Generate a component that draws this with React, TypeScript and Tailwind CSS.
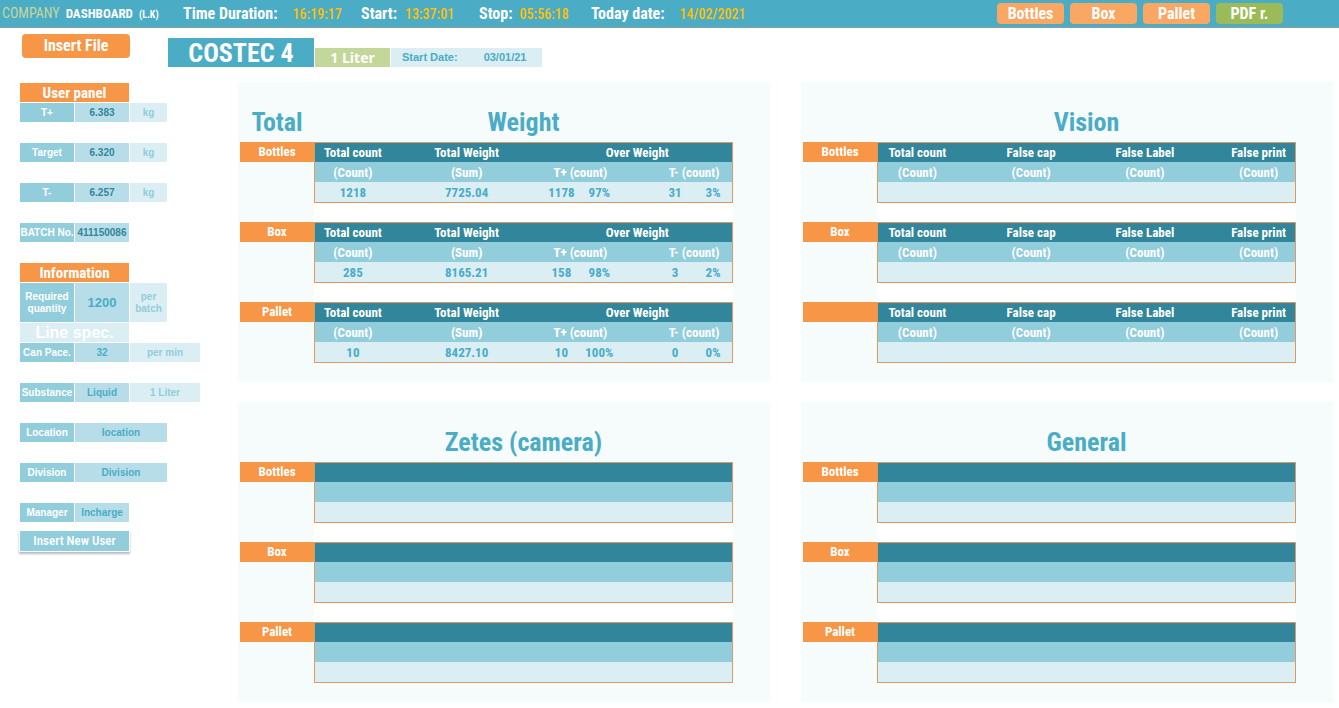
import React from "react";

const narrow = "font-['Agency_FB','Roboto_Condensed','Liberation_Sans_Narrow','Open_Sans_Condensed',sans-serif]";

type Metric = { label: string; value: string };

const clocks: Metric[] = [
  { label: "Time Duration:", value: "16:19:17" },
  { label: "Start:", value: "13:37:01" },
  { label: "Stop:", value: "05:56:18" },
  { label: "Today date:", value: "14/02/2021" },
];

const clockLayout = [
  "w-[178px] gap-[15px]",
  "w-[118px] gap-2",
  "w-[112px] gap-[7px]",
  "gap-[15px]",
];

function Header() {
  return (
    <header className="flex h-7 items-center border-b border-[#8c9a9c] bg-[#4bacc6] pl-0.5 pr-14 font-bold text-white">
      <h1 className="flex w-[181px] shrink-0 items-baseline gap-1.5 whitespace-nowrap text-sm">
        <span className="font-normal text-[#c4d79b]">COMPANY</span>
        <span className="text-[13px]">DASHBOARD</span>
        <span className="text-[10px]">(L.K)</span>
      </h1>
      <dl className="flex grow text-base">
        {clocks.map((c, i) => (
          <div key={c.label} className={`flex shrink-0 items-baseline whitespace-nowrap ${clockLayout[i]}`}>
            <dt>{c.label}</dt>
            <dd className="text-sm font-medium text-[#ffc000]">{c.value}</dd>
          </div>
        ))}
      </dl>
      <nav className="flex gap-1.5">
        {["Bottles", "Box", "Pallet"].map((name) => (
          <button key={name} type="button" className="h-[21px] w-[67px] rounded bg-[#f9a763] text-base leading-5">
            {name}
          </button>
        ))}
        <button type="button" className="h-[21px] w-[67px] rounded bg-[#9bbb59] text-base leading-5">
          PDF r.
        </button>
      </nav>
    </header>
  );
}

function TitleBar() {
  return (
    <div className="flex h-[54px] items-start pl-[22px]">
      <button
        type="button"
        className="mr-[38px] mt-1.5 h-6 w-[108px] rounded bg-[#f79646] text-base font-bold leading-6 text-white"
      >
        Insert File
      </button>
      <div className="flex items-end gap-px pt-2.5">
        <h2 className="h-[29px] w-[146px] bg-[#4bacc6] text-center text-[26px] font-bold leading-[30px] text-white">
          COSTEC 4
        </h2>
        <p className="h-[19px] w-[75px] bg-[#c4d79b] text-center font-['Open_Sans',sans-serif] text-sm font-bold leading-5 text-white">
          1 Liter
        </p>
        <p className="flex h-[19px] w-[151px] gap-[26px] bg-[#daeef3] pl-[11px] font-['Liberation_Sans',sans-serif] text-[11px] font-bold leading-[19px] text-[#4bacc6]">
          <span>Start Date:</span>
          <span>03/01/21</span>
        </p>
      </div>
    </div>
  );
}

type FieldProps = {
  label: string;
  value: string;
  valueClass?: string;
  unit?: string;
  unitClass?: string;
};

function Field({ label, value, valueClass = "w-[54px] text-[#4bacc6]", unit, unitClass = "w-[37px]" }: FieldProps) {
  return (
    <dl className="flex min-h-[19px] gap-px text-center text-[10px] font-bold leading-3">
      <dt className="flex w-[54px] items-center justify-center bg-[#92cddc] text-white">{label}</dt>
      <dd className={`flex items-center justify-center bg-[#b7dee8] ${valueClass}`}>{value}</dd>
      {unit && (
        <dd className={`flex items-center justify-center bg-[#daeef3] text-[#92cddc] ${unitClass}`}>{unit}</dd>
      )}
    </dl>
  );
}

function SectionTitle({ children }: { children: React.ReactNode }) {
  return (
    <h3 className={`mb-px h-[19px] w-[109px] bg-[#f79646] text-center text-[15px] font-bold leading-5 text-white ${narrow}`}>
      {children}
    </h3>
  );
}

function Sidebar() {
  const dark = "w-[54px] text-[#31869b]";
  return (
    <aside className="w-[238px] shrink-0 whitespace-nowrap pl-5 pt-px font-['Liberation_Sans',sans-serif]">
      <SectionTitle>User panel</SectionTitle>
      <div className="flex flex-col gap-[21px]">
        <Field label="T+" value="6.383" valueClass={dark} unit="kg" />
        <Field label="Target" value="6.320" valueClass={dark} unit="kg" />
        <Field label="T-" value="6.257" valueClass={dark} unit="kg" />
        <Field label="BATCH No." value="411150086" valueClass={dark} />
      </div>
      <div className="mt-[21px]">
        <SectionTitle>Information</SectionTitle>
        <div className="flex h-[39px] whitespace-normal">
          <Field
            label="Required quantity"
            value="1200"
            valueClass="w-[54px] text-[#4bacc6] text-[13px]"
            unit="per batch"
          />
        </div>
        <h4 className="my-px h-[19px] w-[109px] bg-[#daeef3] text-center text-base font-bold leading-5 text-white">
          Line spec.
        </h4>
      </div>
      <div className="flex flex-col gap-[21px]">
        <Field label="Can Pace." value="32" unit="per min" unitClass="w-[70px]" />
        <Field label="Substance" value="Liquid" unit="1 Liter" unitClass="w-[70px]" />
        <Field label="Location" value="location" valueClass="w-[92px] text-[#4bacc6]" />
        <Field label="Division" value="Division" valueClass="w-[92px] text-[#4bacc6]" />
        <Field label="Manager" value="Incharge" />
      </div>
      <button
        type="button"
        className={`mt-[9px] h-5 w-[109px] bg-[#92cddc] text-[13px] font-medium leading-5 text-white shadow-[0_0_0_1px_#ffffff,0_2px_2px_1px_#b4bcc4] ${narrow}`}
      >
        Insert New User
      </button>
    </aside>
  );
}

type Block = { name: string; values?: string[] };
type Kind = "weight" | "vision" | "empty";

/* Every block sits on eleven equal columns; wide cells span two of them. */
function BlockTable({ kind, block }: { kind: Kind; block: Block }) {
  const v = block.values ?? [];
  return (
    <table
      className={`w-full table-fixed border-separate border-spacing-0 border border-[#e09a5f] text-center text-[13px] font-bold leading-[19px] ${
        kind === "vision" ? "[&_th]:pl-[3px]" : ""
      }`}
    >
      <colgroup>
        {Array.from({ length: 11 }, (_, i) => (
          <col key={i} />
        ))}
      </colgroup>
      <thead className="text-white">
        <tr className="h-[19px] whitespace-nowrap bg-[#31869b]">
          {kind === "weight" && (
            <>
              <th colSpan={2}>Total count</th>
              <td />
              <th colSpan={2}>Total Weight</th>
              <td />
              <th colSpan={5}>Over Weight</th>
            </>
          )}
          {kind === "vision" && (
            <>
              <th colSpan={2}>Total count</th>
              <td />
              <th colSpan={2}>False cap</th>
              <td />
              <th colSpan={2}>False Label</th>
              <td />
              <th colSpan={2}>False print</th>
            </>
          )}
          {kind === "empty" && <td colSpan={11} />}
        </tr>
        <tr className="h-5 whitespace-nowrap bg-[#92cddc]">
          {kind === "weight" && (
            <>
              <th colSpan={2}>(Count)</th>
              <td />
              <th colSpan={2}>(Sum)</th>
              <td />
              <th colSpan={2}>T+ (count)</th>
              <td />
              <th colSpan={2}>T- (count)</th>
            </>
          )}
          {kind === "vision" && (
            <>
              <th colSpan={2}>(Count)</th>
              <td />
              <th colSpan={2}>(Count)</th>
              <td />
              <th colSpan={2}>(Count)</th>
              <td />
              <th colSpan={2}>(Count)</th>
            </>
          )}
          {kind === "empty" && <td colSpan={11} />}
        </tr>
      </thead>
      <tbody>
        <tr className="h-5 bg-[#daeef3] text-[#4bacc6]">
          {v.length > 0 ? (
            <>
              <td colSpan={2}>{v[0]}</td>
              <td />
              <td colSpan={2}>{v[1]}</td>
              <td />
              <td>{v[2]}</td>
              <td>{v[3]}</td>
              <td />
              <td>{v[4]}</td>
              <td>{v[5]}</td>
            </>
          ) : (
            <td colSpan={11} />
          )}
        </tr>
      </tbody>
    </table>
  );
}

function Panel({ title, corner, kind, blocks }: { title: string; corner?: string; kind: Kind; blocks: Block[] }) {
  return (
    <section className="bg-[#f5fcfb] pb-[19px] pl-0.5 pr-[37px] pt-5">
      <div className="flex h-10 items-center text-[26px] font-bold leading-10 text-[#4bacc6]">
        <span className="w-[74px] shrink-0 text-center">{corner}</span>
        <h3 className="grow text-center">{title}</h3>
      </div>
      {blocks.map((b, i) => (
        <div key={i} className="flex">
          <h4 className="h-5 w-[74px] shrink-0 bg-[#f79646] text-center text-[13px] font-bold leading-5 text-white">
            {b.name}
          </h4>
          <div className={`grow ${i < blocks.length - 1 ? "bg-white pb-[19px]" : ""}`}>
            <BlockTable kind={kind} block={b} />
          </div>
        </div>
      ))}
    </section>
  );
}

const names: Block[] = [{ name: "Bottles" }, { name: "Box" }, { name: "Pallet" }];

export default function App() {
  return (
    <div className={`bg-white ${narrow}`}>
      <Header />
      <TitleBar />
      <div className="flex">
        <Sidebar />
        <main className="grid grow grid-cols-2 gap-x-[31px] gap-y-5 pb-1.5 pr-1.5">
          <Panel
            title="Weight"
            corner="Total"
            kind="weight"
            blocks={[
              { name: "Bottles", values: ["1218", "7725.04", "1178", "97%", "31", "3%"] },
              { name: "Box", values: ["285", "8165.21", "158", "98%", "3", "2%"] },
              { name: "Pallet", values: ["10", "8427.10", "10", "100%", "0", "0%"] },
            ]}
          />
          <Panel title="Vision" kind="vision" blocks={[{ name: "Bottles" }, { name: "Box" }, { name: "" }]} />
          <Panel title="Zetes (camera)" kind="empty" blocks={names} />
          <Panel title="General" kind="empty" blocks={names} />
        </main>
      </div>
    </div>
  );
}
